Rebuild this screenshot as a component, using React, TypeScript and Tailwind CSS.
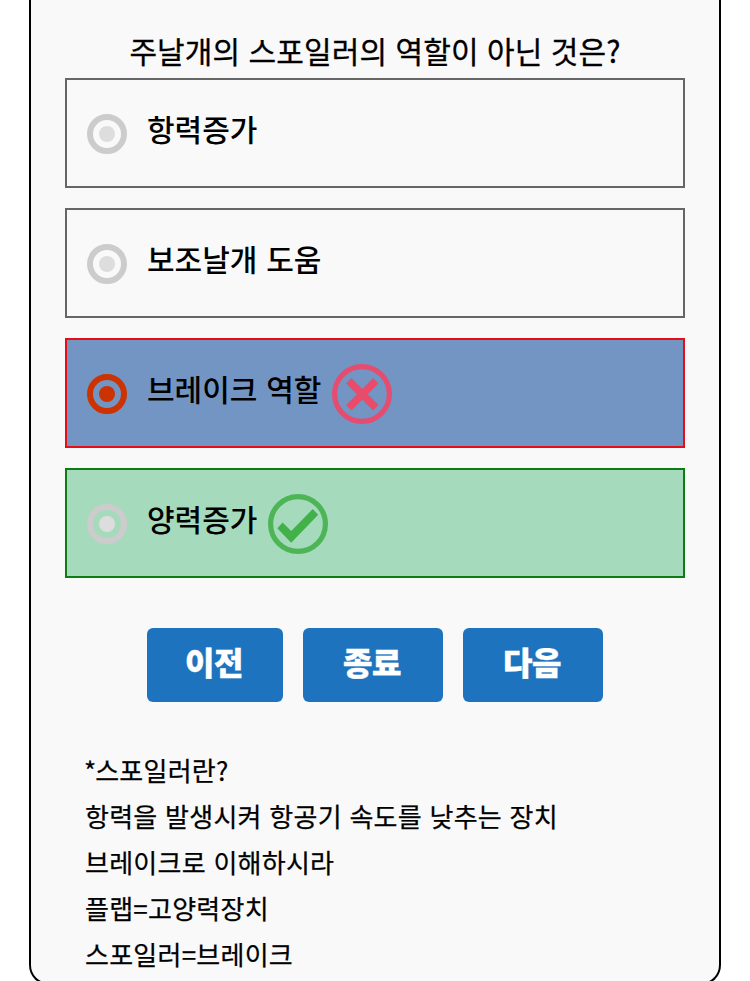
const choices = [
  { label: '항력증가', state: 'none' },
  { label: '보조날개 도움', state: 'none' },
  { label: '브레이크 역할', state: 'wrong' },
  { label: '양력증가', state: 'correct' },
]

const boxStyles: Record<string, string> = {
  none: 'border-[#666666]',
  wrong: 'border-[#e60d16] bg-[#7395c3]',
  correct: 'border-[#0b7d12] bg-[#a5dbbc]',
}

const notes = [
  '항력을 발생시켜 항공기 속도를 낮추는 장치',
  '브레이크로 이해하시라',
  '플랩=고양력장치',
  '스포일러=브레이크',
]

const buttons = [
  { label: '이전', width: 'w-[136px]' },
  { label: '종료', width: 'w-[140px]' },
  { label: '다음', width: 'w-[140px]' },
]

function Radio({ checked }: { checked: boolean }) {
  return (
    <svg width="40" height="40" viewBox="0 0 40 40" fill="none" className="mt-[34px] shrink-0">
      <circle cx="20" cy="20" r="17" stroke={checked ? '#cc3300' : '#cccccc'} strokeWidth="6" />
      <circle cx="20" cy="20" r="8" fill={checked ? '#cc3300' : '#dddddd'} />
    </svg>
  )
}

function Mark({ type }: { type: string }) {
  const wrong = type === 'wrong'
  return (
    <svg width="60" height="60" viewBox="0 0 60 60" fill="none" className="ml-[11px] mt-6 shrink-0">
      <circle cx="30" cy="30" r="27.4" stroke={wrong ? '#e54d70' : '#4db556'} strokeWidth="5.2" />
      {wrong
        ? <path d="M16.8 16.8L43.8 43.8M43.8 16.8L16.8 43.8" stroke="#e94b6b" strokeWidth="7.6" />
        : <path d="M9.3 34.2L14.6 28.6L23.2 37L44.8 15L50.2 20.8L23.2 48.8Z" fill="#42b14a" />}
    </svg>
  )
}

export default function App() {
  return (
    <div className="h-[981px] overflow-hidden bg-white px-[29px] font-['Noto_Sans_CJK_KR',sans-serif] text-black">
      <div className="h-[985px] rounded-b-[20px] border-2 border-t-0 border-black bg-[#f9f9f9] px-[34px] pt-6">
        <h1 className="h-[54px] text-center text-[30px] leading-[52px] font-normal tracking-[0.1px] [word-spacing:1.6px] [-webkit-text-stroke:0.3px_black]">
          주날개의 스포일러의 역할이 아닌 것은?
        </h1>
        <div className="flex flex-col gap-5">
          {choices.map(({ label, state }) => (
            <div key={label} className={`flex h-[110px] items-start border-2 pl-5 ${boxStyles[state]}`}>
              <Radio checked={state === 'wrong'} />
              <span className="ml-5 mt-[23px] text-[30px] leading-[50px] font-medium whitespace-nowrap [word-spacing:2px]">{label}</span>
              {state !== 'none' && <Mark type={state} />}
            </div>
          ))}
        </div>
        <div className="mt-[50px] flex justify-center gap-5">
          {buttons.map(({ label, width }) => (
            <button key={label} className={`h-[74px] rounded-[6px] bg-[#1e73be] pr-0.5 pb-2 text-[32px] font-black tracking-[-0.5px] text-white [-webkit-text-stroke:0.4px_white] ${width}`}>
              {label}
            </button>
          ))}
        </div>
        <div className="mt-[45px] pl-5 text-[26px] leading-[46px] tracking-[0.25px] [word-spacing:1.5px] [-webkit-text-stroke:0.25px_black]">
          <p><span className="-ml-px tracking-[-1px]">*</span>스포일러란?</p>
          {notes.map(note => <p key={note}>{note}</p>)}
        </div>
      </div>
    </div>
  )
}
